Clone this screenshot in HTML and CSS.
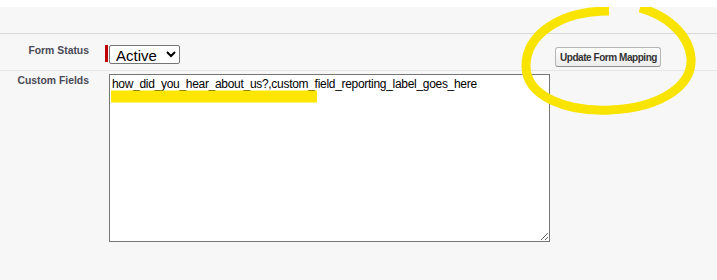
FILE: index.html
```html
<!DOCTYPE html>
<html lang="en">
<head>
  <meta charset="UTF-8" />
  <title>Form Mapping</title>
  <link rel="stylesheet" href="styles.css">
</head>
<body>
  <div class="top-strip"></div>

  <div class="page">
    <div class="page-head"></div>

    <div class="detail-row first">
      <div class="label-col">Form Status</div>
      <div class="data-col">
        <span class="required-bar"></span>
        <select class="status-select">
          <option>Active</option>
          <option>Inactive</option>
        </select>
      </div>
      <button class="btn" type="button">Update Form Mapping</button>
    </div>

    <div class="detail-row">
      <div class="label-col">Custom Fields</div>
      <div class="data-col">
        <textarea class="fields-area">how_did_you_hear_about_us?,custom_field_reporting_label_goes_here</textarea>
      </div>
    </div>

    <!-- highlighter marks drawn over the screenshot -->
    <svg class="marks" width="717" height="273" viewBox="0 7 717 273">
      <line x1="111" y1="96.5" x2="317" y2="96.5" stroke="#ffe600" stroke-width="12" />
      <path d="M 609 11 C 558 11, 526 36, 526 66 C 526 97, 568 112, 610 110 C 660 108, 693 86, 691 58 C 689 34, 666 15, 640 8"
            fill="none" stroke="#f9e400" stroke-width="9" />
    </svg>
  </div>
</body>
</html>
```

FILE: styles.css
```css
body {
  margin: 0;
  font-family: "Liberation Sans", Arial, sans-serif;
  background: #ffffff;
}

.top-strip {
  height: 7px;
  background: #ffffff;
}

.page {
  position: relative;
  background: #f7f7f7;
  height: 273px;
}

.page-head {
  height: 26px;
  border-bottom: 1px solid #d9d9d9;
}

.detail-row {
  display: flex;
  align-items: flex-start;
}

.detail-row.first {
  height: 36px;
  border-bottom: 1px solid #e6e6e6;
}

.label-col {
  width: 89px;
  text-align: right;
  font-size: 10.4px;
  font-weight: bold;
  color: #4a4a56;
  padding-top: 11px;
}

.detail-row + .detail-row .label-col {
  padding-top: 4px;
}

.data-col {
  display: flex;
  align-items: flex-start;
  margin-left: 16px;
}

.first .data-col {
  padding-top: 11px;
}

.detail-row + .detail-row .data-col {
  padding-top: 3px;
  margin-left: 20px;
}

.required-bar {
  width: 3px;
  height: 17px;
  background: #c00000;
  margin-right: 1px;
}

.status-select {
  width: 71px;
  height: 19px;
  font-family: "Liberation Sans", Arial, sans-serif;
  font-size: 15px;
  padding: 0 0 0 2px;
  border: 1px solid #767676;
  border-radius: 2px;
  background: #ffffff;
  color: #000;
}

.btn {
  margin-left: auto;
  margin-right: 56px;
  margin-top: 13px;
  height: 20px;
  padding: 1px 3px 1px 4px;
  font-family: "Liberation Sans", Arial, sans-serif;
  font-size: 10px;
  letter-spacing: -0.45px;
  font-weight: bold;
  color: #333333;
  background: linear-gradient(#ffffff, #ececec);
  border: 1px solid #b5b5b5;
  border-bottom-color: #8f8f8f;
  border-radius: 3px;
}

.fields-area {
  width: 441px;
  height: 168px;
  box-sizing: border-box;
  padding: 2px 2px;
  border: 1px solid #767676;
  font-family: "Liberation Sans", Arial, sans-serif;
  font-size: 12px;
  letter-spacing: -0.3px;
  color: #000;
  background: #ffffff;
  resize: both;
}

.marks {
  position: absolute;
  left: 0;
  top: 0;
  pointer-events: none;
}
```
